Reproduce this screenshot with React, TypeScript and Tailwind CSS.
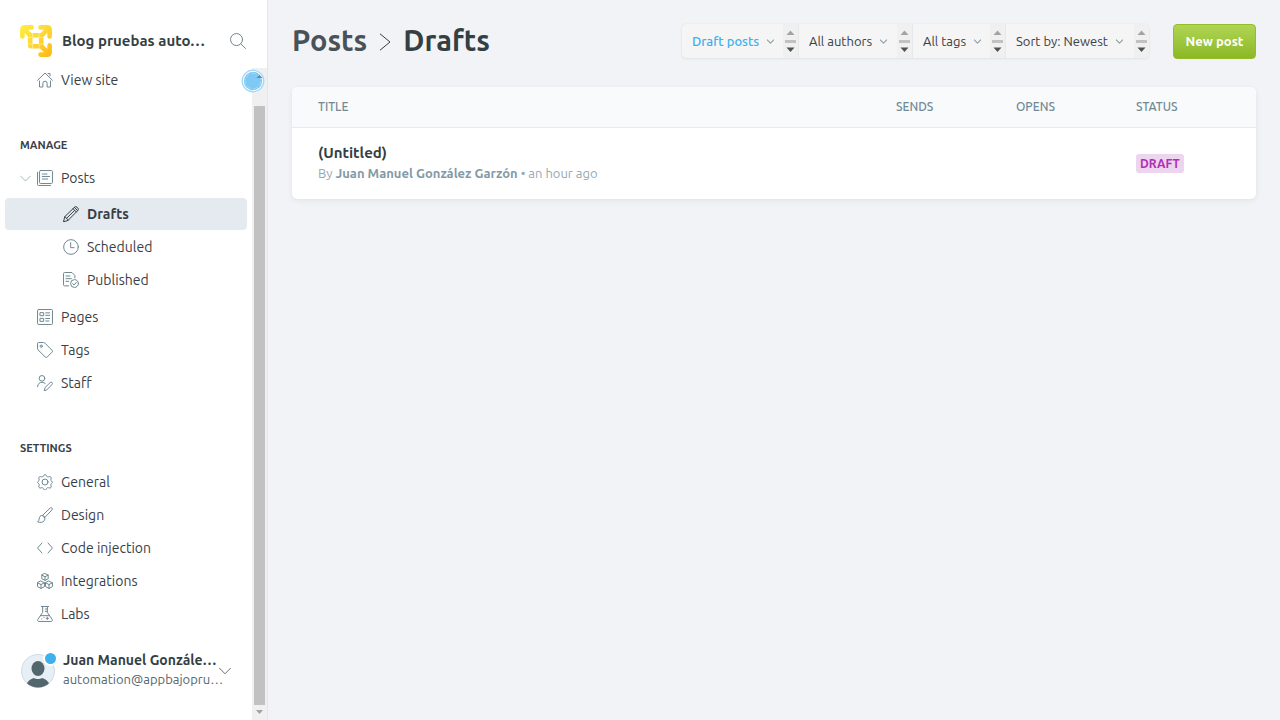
import { useState, type ReactNode } from "react";

type IconProps = { children: ReactNode; className?: string };

function Icon({ children, className = "size-4 text-[#6f8791]" }: IconProps) {
  return (
    <svg
      viewBox="0 0 24 24"
      fill="none"
      stroke="currentColor"
      strokeWidth="1.5"
      strokeLinecap="round"
      strokeLinejoin="round"
      aria-hidden="true"
      className={`shrink-0 ${className}`}
    >
      {children}
    </svg>
  );
}

const icons = {
  home: (
    <>
      <path d="M.8 12.500 12 1.500l11.200 11" />
      <path d="M16.500 2.300h3v3.400" />
      <path d="M3.800 13.500v9h5v-5.500a3.200 3.200 0 0 1 6.400 0v5.500h5v-9" />
    </>
  ),
  posts: (
    <>
      <rect x="3.800" y=".8" width="19.400" height="19.400" rx="1.500" />
      <path d="M.8 3.500v18.200a1.500 1.500 0 0 0 1.500 1.500h18" />
      <path d="M8 6h7M8 9.700h11M8 13.500h8" />
    </>
  ),
  drafts: (
    <>
      <path d="M.8 23.200l2-7.300L17.300 1.800a2.600 2.600 0 0 1 3.700 0l1.200 1.200a2.600 2.600 0 0 1 0 3.700L8 21.200z" />
      <path d="M2.800 15.900 8 21.200M15 4l5 5M17 2l5 5M5.400 18.500 17.500 6.500" />
    </>
  ),
  scheduled: (
    <>
      <circle cx="12" cy="12" r="11" />
      <path d="M11.500 5.500v7.500h5" />
    </>
  ),
  published: (
    <>
      <path d="M8.500 20.800H2.300a1.500 1.500 0 0 1-1.500-1.500V2.300A1.500 1.500 0 0 1 2.300.8h11.200l4.300 4.300v3.700" />
      <path d="M4.500 6h6M4.500 10h8M4.500 14h4" />
      <circle cx="17.300" cy="17.300" r="5.900" />
      <path d="m14.600 17.500 2 2 3.500-4" />
    </>
  ),
  pages: (
    <>
      <rect x=".8" y=".8" width="22.400" height="22.400" rx="1.500" />
      <path d="M5 5.500h5v4.500H5zM5 14h5v4.500H5zM13 5.800h6M13 9.500h6M13 14.300h6M13 18h5" />
    </>
  ),
  tags: (
    <>
      <path d="M.8 2.300A1.500 1.500 0 0 1 2.300.8h7.500a3 3 0 0 1 2.100.9l10.700 10.700a2 2 0 0 1 0 2.800l-7.400 7.400a2 2 0 0 1-2.800 0L1.700 11.900a3 3 0 0 1-.9-2.100z" />
      <circle cx="6.300" cy="6.300" r="1.700" />
    </>
  ),
  staff: (
    <>
      <circle cx="7.500" cy="5" r="4.200" />
      <path d="M.8 17.500a6.800 6.800 0 0 1 11.500-4.900" />
      <path d="m11 23.200 1.200-4.500 7.600-7.300a2 2 0 0 1 2.800 0 2 2 0 0 1 0 2.900l-7.500 7.500z" />
    </>
  ),
  general: (
    <>
      <circle cx="12" cy="12" r="4.500" />
      <path d="M10 2.200a2.200 2.200 0 0 1 4 0l.5 1.100a2.200 2.200 0 0 0 2.700 1.100l1.200-.4a2.200 2.200 0 0 1 2.800 2.800l-.4 1.200a2.200 2.200 0 0 0 1.100 2.700l.5.300a2.200 2.200 0 0 1 0 3l-.5.300a2.200 2.200 0 0 0-1.100 2.700l.4 1.200a2.200 2.200 0 0 1-2.800 2.800l-1.200-.4a2.200 2.200 0 0 0-2.700 1.100l-.5 1.100a2.200 2.200 0 0 1-4 0l-.5-1.100a2.200 2.200 0 0 0-2.700-1.100l-1.200.4A2.200 2.200 0 0 1 2.800 18.200l.4-1.200a2.200 2.200 0 0 0-1.100-2.700L1.600 14a2.200 2.200 0 0 1 0-3l.5-.3A2.200 2.200 0 0 0 3.200 8l-.4-1.200A2.200 2.200 0 0 1 5.600 4l1.200.4a2.200 2.200 0 0 0 2.700-1.100z" />
    </>
  ),
  design: (
    <>
      <path d="M8.500 12.500 19.800 1.500a2 2 0 0 1 2.800 2.800L11.700 15.700z" />
      <path d="M8.500 12.500a4.500 4.500 0 0 0-4 1.600C2.600 16.500 4.200 20 .8 22.300c4.500 1.600 8.200.8 10-1.700a5.500 5.500 0 0 0 .9-4.900z" />
    </>
  ),
  code: <path d="M7.500 4.500.8 12l6.700 7.500M16.500 4.500l6.700 7.500-6.700 7.500" />,
  integrations: (
    <>
      <path d="m12 .8 4.800 2.400v5.400L12 11 7.200 8.600V3.200zM7.200 3.200 12 5.600l4.800-2.400M12 5.600V11" />
      <path d="m6 12.200 5.200 2.500v5.700L6 23.200.8 20.400v-5.700zM.8 14.700 6 17.300l5.200-2.600M6 17.300v5.900" />
      <path d="m18 12.200 5.200 2.500v5.700L18 23.200l-5.200-2.800v-5.700zM12.800 14.700l5.200 2.600 5.200-2.600M18 17.300v5.900" />
    </>
  ),
  labs: (
    <>
      <path d="M6.500.8h11M8.500.8v8.700L1.200 20.200a2 2 0 0 0 1.700 3h18.200a2 2 0 0 0 1.700-3L15.500 9.500V.8" />
      <path d="M5 14.500h14M12.500 4.500h3M12.500 8h3M7 19.500h.2M10.500 17.300h.2M15.500 16.800v3.400M13.800 18.500h3.400" />
    </>
  ),
  search: (
    <>
      <circle cx="9.800" cy="9.800" r="9" />
      <path d="m16.200 16.200 7 7" />
    </>
  ),
  chevron: <path d="m1 6.500 11 11 11-11" />,
};

type NavItem = { label: string; icon: ReactNode };

const drafts: NavItem[] = [
  { label: "Drafts", icon: icons.drafts },
  { label: "Scheduled", icon: icons.scheduled },
  { label: "Published", icon: icons.published },
];

const manage: NavItem[] = [
  { label: "Pages", icon: icons.pages },
  { label: "Tags", icon: icons.tags },
  { label: "Staff", icon: icons.staff },
];

const settings: NavItem[] = [
  { label: "General", icon: icons.general },
  { label: "Design", icon: icons.design },
  { label: "Code injection", icon: icons.code },
  { label: "Integrations", icon: icons.integrations },
  { label: "Labs", icon: icons.labs },
];

function NavList({ items }: { items: NavItem[] }) {
  return (
    <ul>
      {items.map((item) => (
        <li key={item.label}>
          <a href="#" className="flex h-[33px] items-center gap-2 pl-[37px]">
            <Icon>{item.icon}</Icon>
            {item.label}
          </a>
        </li>
      ))}
    </ul>
  );
}

function Logo() {
  return (
    <svg viewBox="0 0 32 32" fill="none" aria-hidden="true" className="size-8 shrink-0">
      <defs>
        <linearGradient id="logo" x1="0" y1="0" x2="32" y2="32" gradientUnits="userSpaceOnUse">
          <stop offset="0" stopColor="#ffee3d" />
          <stop offset=".5" stopColor="#fdd835" />
          <stop offset="1" stopColor="#fdb515" />
        </linearGradient>
      </defs>
      <g stroke="url(#logo)" strokeWidth="4.600" strokeLinecap="round" strokeLinejoin="round">
        <path d="M2.400 11.500V4.400a2 2 0 0 1 2-2h7.200M20.500 2.400h7.100a2 2 0 0 1 2 2v7.100M29.600 20.400v7.200a2 2 0 0 1-2 2h-7.100" />
        <path d="m4 4 6 6M28 4l-6 6M28 28l-6-6" />
        <rect x="10.200" y="10.200" width="11" height="11" rx="1" />
      </g>
      <path d="M12.500 8v4.500H8M19 8v4.500h4.500M12.500 23.500V19H8M19 23.500V19h4.500" stroke="#fff" strokeOpacity=".55" strokeWidth=".7" />
    </svg>
  );
}

const filters = [
  { name: "Post type", value: "Draft posts", width: "w-[117px]", color: "text-[#3eb0ef] font-medium" },
  { name: "Author", value: "All authors", width: "w-[114px]", color: "text-[#394047]" },
  { name: "Tag", value: "All tags", width: "w-[93px]", color: "text-[#394047]" },
  { name: "Sort order", value: "Sort by: Newest", width: "w-[143px]", color: "text-[#394047]" },
];

function Filter({ name, value, width, color }: (typeof filters)[number]) {
  return (
    <label className={`flex items-stretch border-r border-[#e6e9ec] last:border-r-0 ${width}`}>
      <span className="flex flex-1 items-center gap-2 pl-2.5">
        <select aria-label={name} className={`field-sizing-content appearance-none bg-transparent text-[13px] leading-5 outline-none ${color}`}>
          <option>{value}</option>
        </select>
        <Icon className="size-[7px] text-[#8fa3ac] stroke-4">{icons.chevron}</Icon>
      </span>
      <svg viewBox="0 0 15 34" aria-hidden="true" className="h-[34px] w-[15px] shrink-0 bg-[#f0f0f0]">
        <path d="M3.500 11 7.500 6.500l4 4.500z" fill="#a3a3a3" />
        <path d="M2 16h11v3H2z" fill="#c1c1c1" />
        <path d="M3.500 23.500h8l-4 4.500z" fill="#505050" />
      </svg>
    </label>
  );
}

export default function App() {
  const [open, setOpen] = useState(true);
  return (
    <div className="flex min-h-screen bg-[#f2f3f7] font-['Ubuntu','Noto_Sans',sans-serif] text-sm text-[#394047]">
      <aside className="relative flex w-[268px] shrink-0 flex-col border-r border-[#e3e7ec] bg-white">
        <header className="flex h-[68px] items-center gap-2.5 pt-3.5 pr-[21px] pl-5">
          <Logo />
          <strong className="text-[15px] font-bold whitespace-nowrap text-[#343f44]">Blog pruebas auto…</strong>
          <button type="button" aria-label="Search" className="ml-auto">
            <Icon>{icons.search}</Icon>
          </button>
        </header>
        <div className="flex flex-1">
          <div className="flex min-w-0 flex-1 flex-col">
            <nav className="flex-1">
              <a href="#" className="flex h-6 items-center gap-2 pl-[37px]">
                <Icon>{icons.home}</Icon>
                View site
              </a>
              <h2 className="mt-[43px] mb-1.5 pl-5 text-[11px] leading-5 font-semibold">MANAGE</h2>
              <div className="flex h-[34px] items-center gap-1.5 pl-5">
                <button type="button" aria-label="Toggle posts" onClick={() => setOpen(!open)}>
                  <Icon className="size-[11px] text-[#9fb0b8] stroke-2">{icons.chevron}</Icon>
                </button>
                <a href="#" className="flex items-center gap-2">
                  <Icon>{icons.posts}</Icon>
                  Posts
                </a>
              </div>
              {open && (
                <ul className="flex flex-col gap-px px-[5px] pt-[3px] pb-1">
                  {drafts.map((item, index) => (
                    <li key={item.label}>
                      <a
                        href="#"
                        className={`flex h-8 items-center gap-2 rounded pl-[58px] ${index === 0 ? "bg-[#e5eaf1] font-bold text-[#343f44]" : ""}`}
                      >
                        <Icon className={index === 0 ? "size-4 text-[#343f44]" : "size-4 text-[#6f8791]"}>{item.icon}</Icon>
                        {item.label}
                      </a>
                    </li>
                  ))}
                </ul>
              )}
              <NavList items={manage} />
              <h2 className="mt-[39px] mb-[7px] pl-5 text-[11px] leading-5 font-semibold">SETTINGS</h2>
              <NavList items={settings} />
            </nav>
            <button type="button" className="flex items-center px-5 pt-4 pb-7 text-left">
              <span className="relative shrink-0">
                <svg viewBox="0 0 36 36" aria-hidden="true" className="size-9">
                  <defs>
                    <clipPath id="avatar">
                      <circle cx="18" cy="18" r="16.500" />
                    </clipPath>
                  </defs>
                  <circle cx="18" cy="18" r="16.500" fill="#e5eff5" stroke="#d3dbe3" />
                  <g clipPath="url(#avatar)" fill="#54666d">
                    <ellipse cx="18" cy="15.500" rx="6.500" ry="7.500" />
                    <path d="M6 35c0-6 4-9 8-10 2 1.300 6 1.300 8 0 4 1 8 4 8 10z" />
                  </g>
                </svg>
                <span className="absolute -top-0.5 -right-0.5 size-[15px] rounded-full border-2 border-white bg-[#3eb0ef]" />
              </span>
              <span className="ml-[7px] w-40 shrink-0 pb-1 whitespace-nowrap">
                <strong className="block leading-5 font-bold text-[#343f44]">Juan Manuel Gonzále…</strong>
                <span className="block text-[13px] leading-[18px] text-[#54666d]">automation@appbajopru…</span>
              </span>
              <Icon className="-ml-1 size-3 text-[#343f44]">{icons.chevron}</Icon>
            </button>
          </div>
          <div aria-hidden="true" className="flex w-[15px] shrink-0 flex-col items-center bg-[#f0f0f0]">
            <svg viewBox="0 0 15 38" className="h-[38px] w-[15px]">
              <path d="M4 10 7.500 6l3.500 4z" fill="#505050" />
            </svg>
            <div className="w-[11px] flex-1 bg-[#c1c1c1]" />
            <svg viewBox="0 0 15 15" className="size-[15px]">
              <path d="M4 5h7l-3.500 4z" fill="#a3a3a3" />
            </svg>
          </div>
        </div>
        <svg viewBox="0 0 24 24" aria-hidden="true" className="absolute top-[69px] left-[241px] size-6">
          <circle cx="12" cy="12" r="10.800" fill="#fff" stroke="#9bd6f6" strokeWidth="1.200" />
          <circle cx="12" cy="12" r="9.200" fill="#7fcaf4" />
          <circle cx="12" cy="12" r="7.800" stroke="#a9dbf7" strokeWidth=".8" strokeDasharray="5 2" fill="none" />
          <path d="m15.500 9 3-3 3 3z" fill="#6a8798" />
        </svg>
      </aside>

      <main className="min-w-0 flex-1 px-6 pt-6">
        <header className="flex items-start">
          <h1 className="flex items-center text-[29px] leading-8 font-bold text-[#343f44]">
            <a href="#" className="text-[#475358]">Posts</a>
            <svg viewBox="0 0 12 18" fill="none" stroke="currentColor" aria-hidden="true" className="mx-3 mt-1 h-[18px] w-3">
              <path d="m1 .8 10 8.200L1 17.200" />
            </svg>
            Drafts
          </h1>
          <div className="ml-auto flex overflow-hidden rounded bg-[#f5f5f5] shadow-[0_0_1px_rgba(0,0,0,0.12),0_1px_3px_rgba(0,0,0,0.06)]">
            {filters.map((filter) => (
              <Filter key={filter.name} {...filter} />
            ))}
          </div>
          <button
            type="button"
            className="ml-6 h-[35px] w-[83px] rounded border border-[#94bd2c] bg-linear-to-b from-[#afd553] to-[#8db823] text-[13px] font-semibold text-white"
          >
            New post
          </button>
        </header>

        <section className="mt-7 overflow-hidden rounded-[5px] bg-white shadow-[0_0_1px_rgba(0,0,0,0.1),0_2px_6px_rgba(0,0,0,0.06)]">
          <table className="w-full table-fixed text-left">
            <thead>
              <tr className="h-10 border-b border-[#e4ecf2] bg-[#f9fafc] text-xs text-[#738a94]">
                <th className="pl-[26px] font-medium">TITLE</th>
                <th className="w-[120px] font-medium">SENDS</th>
                <th className="w-[120px] font-medium">OPENS</th>
                <th className="w-[120px] font-medium">STATUS</th>
              </tr>
            </thead>
            <tbody>
              <tr className="h-[72px]">
                <td className="pl-[26px]">
                  <a href="#" className="block text-[15px] leading-5 font-bold text-[#343f44]">(Untitled)</a>
                  <p className="text-[13px] leading-5 text-[#96a9b3]">
                    By <span className="font-semibold text-[#839aa6]">Juan Manuel González Garzón</span> • an hour ago
                  </p>
                </td>
                <td />
                <td />
                <td>
                  <span className="inline-block rounded-[3px] bg-[#eed5ef] px-1 text-xs leading-[19px] font-semibold text-[#b02fb8]">DRAFT</span>
                </td>
              </tr>
            </tbody>
          </table>
        </section>
      </main>
    </div>
  );
}
